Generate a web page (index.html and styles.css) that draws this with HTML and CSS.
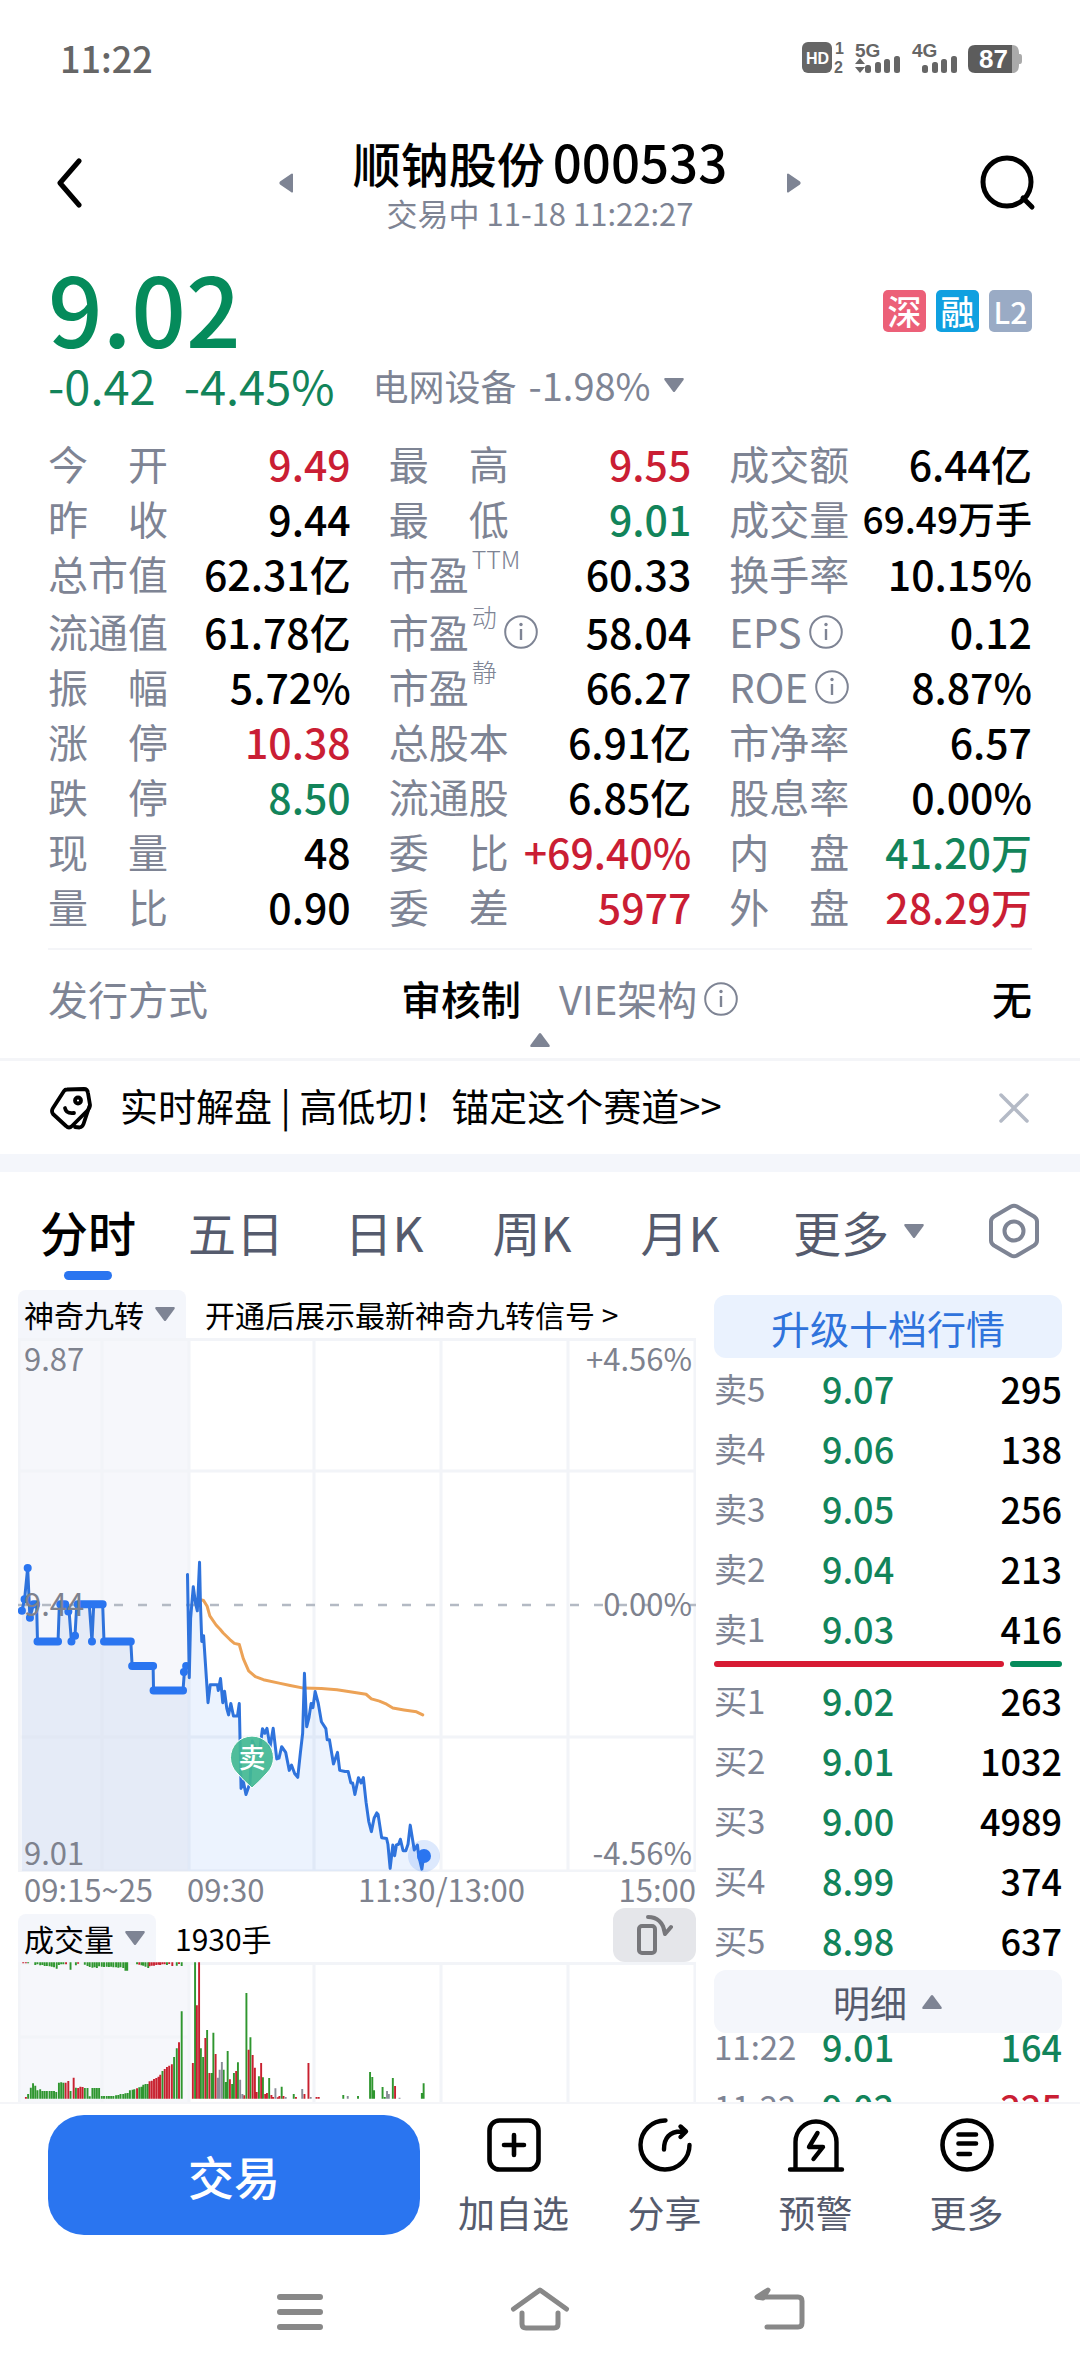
FILE: index.html
```html
<!DOCTYPE html>
<html lang="zh-CN">
<head>
<meta charset="utf-8">
<meta name="viewport" content="width=device-width, initial-scale=1">
<title>顺钠股份 000533</title>
<link rel="stylesheet" href="styles.css">
</head>
<body>
<svg class="defs" aria-hidden="true">
  <symbol id="info" viewBox="0 0 34 34"><circle cx="17" cy="17" r="15.8" fill="none" stroke="currentColor" stroke-width="2"/><path d="M17 14v11" stroke="currentColor" stroke-width="2.4"/><circle cx="17" cy="9.5" r="1.7" fill="currentColor"/></symbol>
  <symbol id="down" viewBox="0 0 22 16"><path d="M2 1h18q1.500 .5 .5 2L12 14.500q-1 1-2 0L1.500 3q-1-1.500 .5-2z" fill="currentColor"/></symbol>
  <symbol id="up" viewBox="0 0 22 16"><path d="M2 15h18q1.500-.5 .5-2L12 1.500q-1-1-2 0L1.500 13q-1 1.500 .5 2z" fill="currentColor"/></symbol>
</svg>

<div class="status">
  <time>11:22</time>
  <svg class="status-icons" width="222" height="34" viewBox="0 0 222 34" role="img" aria-label="信号与电量">
    <g fill="#666">
      <rect x="1" y="2" width="30" height="31" rx="6"/>
      <text x="34" y="14" class="st-num">1</text><text x="33" y="33" class="st-num">2</text>
      <text x="54" y="17" class="st-net">5G</text><text x="111" y="17" class="st-net">4G</text>
      <path d="M59 18l5 6H54zM59 33l5-6H54z"/>
      <rect x="64" y="25" width="6" height="8" rx="2.500"/><rect x="74" y="22" width="6" height="11" rx="2.500"/><rect x="83" y="19" width="6" height="14" rx="2.500"/><rect x="93" y="16" width="6" height="17" rx="2.500"/>
      <rect x="121" y="25" width="6" height="8" rx="2.500"/><rect x="131" y="22" width="6" height="11" rx="2.500"/><rect x="140" y="19" width="6" height="14" rx="2.500"/><rect x="150" y="16" width="6" height="17" rx="2.500"/>
    </g>
    <path d="M200 5h11q7 0 7 8v1h1q2 0 2 3v4q0 3-2 3h-1v1q0 8-7 8h-11z" fill="#aaa"/>
    <path d="M174 5h37v28h-37q-7 0-7-7V12q0-7 7-7z" fill="#5c5c5c"/>
    <text x="5" y="24" class="st-hd">HD</text>
    <text x="178" y="28" class="st-bat">87</text>
  </svg>
</div>

<header class="head">
  <button class="icon-btn" aria-label="返回"><svg width="30" height="50" viewBox="0 0 30 50"><path d="M25 3L6 25l19 22" fill="none" stroke="#000" stroke-width="5" stroke-linecap="round" stroke-linejoin="round"/></svg></button>
  <button class="icon-btn" aria-label="上一只"><svg width="16" height="22" viewBox="0 0 16 22"><path d="M15 2v18q-1 1-2 0L2 12.500q-1.500-1.500 0-3L13 2q1-1 2 0z" fill="#7e8494"/></svg></button>
  <div class="head-title">
    <h1>顺钠股份<span>000533</span></h1>
    <p>交易中 11-18 11:22:27</p>
  </div>
  <button class="icon-btn" aria-label="下一只"><svg width="16" height="22" viewBox="0 0 16 22"><path d="M1 2v18q1 1 2 0l11-7.500q1.500-1.500 0-3L3 2Q2 1 1 2z" fill="#7e8494"/></svg></button>
  <button class="icon-btn" aria-label="搜索"><svg width="56" height="56" viewBox="0 0 56 56"><circle cx="27" cy="27" r="24" fill="none" stroke="#000" stroke-width="5"/><path d="M43 43l9 9" stroke="#000" stroke-width="5" stroke-linecap="round"/></svg></button>
</header>

<main class="content">
  <section class="price">
    <div class="price-top">
      <strong>9.02</strong>
      <div class="badges"><span class="badge sz">深</span><span class="badge rz">融</span><span class="badge l2">L2</span></div>
    </div>
    <div class="price-sub">
      <span class="chg">-0.42</span><span class="chg">-4.45%</span>
      <button class="sector"><span>电网设备</span><span class="sector-num">-1.98%</span><svg width="22" height="16"><use href="#down"/></svg></button>
    </div>
  </section>

  <dl class="quotes">
    <div><dt>今　开</dt><dd class="red">9.49</dd></div>
    <div><dt>最　高</dt><dd class="red">9.55</dd></div>
    <div><dt>成交额</dt><dd>6.44亿</dd></div>
    <div><dt>昨　收</dt><dd>9.44</dd></div>
    <div><dt>最　低</dt><dd class="green">9.01</dd></div>
    <div><dt>成交量</dt><dd class="small">69.49万手</dd></div>
    <div><dt>总市值</dt><dd>62.31亿</dd></div>
    <div><dt>市盈<sup>TTM</sup></dt><dd>60.33</dd></div>
    <div><dt>换手率</dt><dd>10.15%</dd></div>
    <div><dt>流通值</dt><dd>61.78亿</dd></div>
    <div><dt>市盈<sup>动</sup><svg class="info"><use href="#info"/></svg></dt><dd>58.04</dd></div>
    <div><dt>EPS<svg class="info"><use href="#info"/></svg></dt><dd>0.12</dd></div>
    <div><dt>振　幅</dt><dd>5.72%</dd></div>
    <div><dt>市盈<sup>静</sup></dt><dd>66.27</dd></div>
    <div><dt>ROE<svg class="info"><use href="#info"/></svg></dt><dd>8.87%</dd></div>
    <div><dt>涨　停</dt><dd class="red">10.38</dd></div>
    <div><dt>总股本</dt><dd>6.91亿</dd></div>
    <div><dt>市净率</dt><dd>6.57</dd></div>
    <div><dt>跌　停</dt><dd class="green">8.50</dd></div>
    <div><dt>流通股</dt><dd>6.85亿</dd></div>
    <div><dt>股息率</dt><dd>0.00%</dd></div>
    <div><dt>现　量</dt><dd>48</dd></div>
    <div><dt>委　比</dt><dd class="red">+69.40%</dd></div>
    <div><dt>内　盘</dt><dd class="green">41.20万</dd></div>
    <div><dt>量　比</dt><dd>0.90</dd></div>
    <div><dt>委　差</dt><dd class="red">5977</dd></div>
    <div><dt>外　盘</dt><dd class="red">28.29万</dd></div>
  </dl>

  <dl class="issue">
    <div><dt>发行方式</dt><dd>审核制</dd></div>
    <div><dt>VIE架构<svg class="info"><use href="#info"/></svg></dt><dd>无</dd></div>
  </dl>
  <button class="collapse" aria-label="收起"><svg width="22" height="16"><use href="#up"/></svg></button>

  <div class="promo">
    <svg width="42" height="44" viewBox="0 0 42 44" fill="none" stroke="#000" stroke-width="3.800" stroke-linejoin="round" stroke-linecap="round"><path d="M17 3.500L34 3q3.500 0 4 4L40 19q0 3-2 5L22 40q-3 3-6 0L3 28q-2-3 0-6L14 5q1-1.500 3-1.500z"/><path d="M39.500 20l-6 18q-1 3-4 3.500L25 41"/><circle cx="28" cy="14.500" r="3"/><path d="M15 22q1 6 9 5"/></svg>
    <a href="#">实时解盘 | 高低切！锚定这个赛道&gt;&gt;</a>
    <button class="icon-btn" aria-label="关闭"><svg width="32" height="32" viewBox="0 0 32 32"><path d="M3 3l26 26M29 3L3 29" stroke="#b4bac6" stroke-width="3.500" stroke-linecap="round"/></svg></button>
  </div>

  <nav class="tabs">
    <button class="active">分时</button>
    <button>五日</button>
    <button>日K</button>
    <button>周K</button>
    <button>月K</button>
    <button class="more">更多<svg width="22" height="16"><use href="#down"/></svg></button>
    <button aria-label="设置"><svg width="52" height="56" viewBox="0 0 52 56" fill="none" stroke="#7e8494" stroke-width="4"><path d="M23 3.500q3-1.500 6 0l17 10q3 2 3 5v19q0 3-3 5l-17 10q-3 1.500-6 0l-17-10q-3-2-3-5v-19q0-3 3-5z" stroke-linejoin="round"/><circle cx="26" cy="28" r="9.500"/></svg></button>
  </nav>

  <div class="board">
    <section class="charts">
      <div class="chart-head">
        <label class="pick"><select aria-label="主图指标"><option>神奇九转</option></select><svg width="22" height="16"><use href="#down"/></svg></label>
        <a href="#">开通后展示最新神奇九转信号 &gt;</a>
      </div>
      <div class="plot">
        <svg viewBox="0 0 678 534" role="img" aria-label="分时走势">
          <rect width="171" height="534" fill="#f6f7fb"/>
          <path d="M1 1.500H677V533H1zM84 0V534M171 0V534M296 0V534M423 0V534M550 0V534M0 133H678M0 399H678" fill="none" stroke="#f2f4f8" stroke-width="3"/>
          <path d="M0 267H678" stroke="#b4bac4" stroke-width="2.500" stroke-dasharray="9 15"/>
          <g transform="translate(-18 -41) scale(.4464 .3827)" fill="none">
            <path d="M49 820L55 790 62 708 67 838 75 803 82 803 84 900 130 900 133 803 150 803 155 825 160 900 168 885 172 803 200 803 206 900 210 803 230 803 233 900 293 900 296 964 343 964 344 1028 410 1028 413 980 421 964V1500H49z" fill="#2a60d0" fill-opacity=".08"/>
            <path d="M421 725L424 995 427 840 433 757 438 800 442 820 447 693 449 800 452 900 456 885 466 1060 471 1013 487 1013 489 1028 494 997 499 1060 503 1030 508 1075 512 1092 517 1062 523 1095 532 1095 536 1062 540 1284 545 1265 551 1300 560 1270 565 1160 580 1200 588 1128 593 1140 598 1127 605 1175 612 1127 620 1207 625 1205 631 1175 640 1190 648 1237 653 1223 660 1245 667 1255 673 1190 678 1140 682 983 687 1123 692 1100 697 1062 701 1073 706 1031 713 1062 720 1110 730 1128 733 1157 738 1157 747 1220 756 1190 761 1237 773 1240 780 1240 786 1270 790 1270 795 1300 803 1256 809 1270 814 1256 820 1320 826 1370 832 1397 838 1362 844 1348 847 1352 855 1413 866 1415 869 1430 874 1493 880 1432 884 1460 888 1432 893 1430 897 1417 903 1447 909 1447 914 1430 919 1380 928 1445 935 1432 938 1460 945 1495 949 1462V1500H421z" fill="#2a75f0" fill-opacity=".09"/>
            <g stroke-linejoin="round" stroke-linecap="round">
              <path class="ns avg" d="M447 790L456 793 464 808 470 833 484 857 493 868 500 878 515 895 525 905 536 908 545 945 557 977 572 992 590 1000 625 1009 650 1015 680 1022 720 1023 755 1026 820 1038 832 1050 850 1056 866 1064 880 1074 905 1079 933 1084 947 1092"/>
              <path class="ns line" d="M49 820L55 790 62 708 67 838 75 803 82 803 84 900 130 900 133 803 150 803 155 825 160 900 168 885 172 803 200 803 206 900 210 803 230 803 233 900 293 900 296 964 343 964 344 1028 410 1028 413 980 418 964"/>
              <path class="ns dots" d="M49 820h.1M55 790h.1M62 708h.1M67 838h.1M75 803h6M84 900H130M135 803H146M153 822h.1M160 900h.1M168 885h.1M174 803H230M206 900h.1M233 900H293M296 964H343M344 1028H410M412 980h.1M417 964h.1"/>
              <path class="ns line" d="M420 725L424 995 427 840 433 757 438 800 442 820 447 693 449 800 452 900 456 885 466 1060 471 1013 487 1013 489 1028 494 997 499 1060 503 1030 508 1075 512 1092 517 1062 523 1095 532 1095 536 1062 540 1284 545 1265 551 1300 560 1270 565 1160 580 1200 588 1128 593 1140 598 1127 605 1175 612 1127 620 1207 625 1205 631 1175 640 1190 648 1237 653 1223 660 1245 667 1255 673 1190 678 1140 682 983 687 1123 692 1100 697 1062 701 1073 706 1031 713 1062 720 1110 730 1128 733 1157 738 1157 747 1220 756 1190 761 1237 773 1240 780 1240 786 1270 790 1270 795 1300 803 1256 809 1270 814 1256 820 1320 826 1370 832 1397 838 1362 844 1348 847 1352 855 1413 866 1415 869 1430 874 1493 880 1432 884 1460 888 1432 893 1430 897 1417 903 1447 909 1447 914 1430 919 1380 928 1445 935 1432 938 1460 945 1495 949 1462"/>
            </g>
          </g>
          <circle cx="406" cy="518" r="16" fill="#2a75f0" fill-opacity=".16"/>
          <circle cx="406" cy="518" r="7" fill="#2a75f0"/>
          <path d="M234 450Q226 443 219 435A21.500 21.500 0 1 1 249 435Q242 443 234 450z" fill="#42b893" fill-opacity=".92" stroke="#fff" stroke-width="1"/>
          <text x="234" y="430" class="pin">卖</text>
        </svg>
        <span class="tick tl">9.87</span><span class="tick tr">+4.56%</span>
        <span class="tick ml">9.44</span><span class="tick mr">0.00%</span>
        <span class="tick bl">9.01</span><span class="tick br">-4.56%</span>
      </div>
      <div class="axis"><span>09:15~25</span><span>09:30</span><span>11:30/13:00</span><span>15:00</span></div>
      <div class="chart-head vol-head">
        <label class="pick"><select aria-label="副图指标"><option>成交量</option></select><svg width="22" height="16"><use href="#down"/></svg></label>
        <span>1930手</span>
        <button class="rotate" aria-label="横屏"><svg width="36" height="42" viewBox="0 0 36 42" fill="none" stroke="#77777b" stroke-width="4" stroke-linecap="round" stroke-linejoin="round"><rect x="2" y="12" width="16" height="27" rx="3"/><path d="M11 3q14 0 17 16M26 12l2 8 6-7"/></svg></button>
      </div>
      <svg class="vol" viewBox="0 0 678 270" role="img" aria-label="成交量柱图">
        <rect width="171" height="270" fill="#f6f7fb"/>
        <path d="M1 270V1.500H677V270M84 0V270M171 0V270M296 0V270M423 0V270M550 0V270M0 75H171" fill="none" stroke="#f2f4f8" stroke-width="3"/>
        <g transform="translate(-18 -105) scale(.4464 .3333)" fill="none" stroke-width="4.300">
          <path stroke="#2f962f" d="M63 711V725M69 692V725M74 679V725M79 686V725M84 700V725M90 697V725M95 702V725M100 702V725M105 702V725M111 702V725M116 702V725M121 702V725M126 705V725M132 677V725M137 676V725M142 677V725M158 702V725M170 692V725M190 693V725M196 693V725M201 718V725M207 693V725M212 693V725M217 693V725M222 693V725M228 717V725M233 717V725M239 717V725M244 717V725M249 717V725M254 717V725M260 715V725M265 714V725M270 711V725M276 711V725M281 709V725M286 708V725M291 700V725M297 698V725M301 697V725M312 691V725M317 689V725M321 683V725M326 681V725M331 681V725M364 642V725M390 600V725M396 574V725M407 463V725
          M63 316V319M79 316V324M84 316V322M90 316V325M95 316V324M100 316V327M105 316V327M111 316V328M116 316V329M121 316V331M127 316V335M132 316V324M137 316V322M142 316V322M158 316V338M170 316V325M190 316V323M196 316V327M201 316V330M207 316V332M212 316V331M217 316V333M222 316V328M228 316V329M233 316V330M239 316V329M244 316V330M249 316V329M254 316V331M260 316V331M265 316V332M270 316V331M276 316V333M281 316V341M285 316V341M307 316V322M317 316V325M321 316V326M326 316V329M332 316V333M374 316V324M396 316V326M407 316V327
          M437 316V725M450 574V725M455 600V725M464 519V725M474 648V725M478 527V725M501 638V725M506 675V725M510 582V725M520 681V725M524 648V725M533 616V725M552 408V725M561 541V725M580 658V725M589 661V725M603 663V725M631 689V725M658 711V725M769 714V725M802 717V725M829 645V725M834 660V725M838 700V725M857 690V725M862 720V725M880 663V725M945 708V725M949 679V725"/>
          <path stroke="#c8202f" d="M58 720V725M147 677V725M153 672V725M165 662V725M175 693V725M180 689V725M185 690V725M307 694V725M335 673V725M340 671V725M345 666V725M350 663V725M355 659V725M359 653V725M369 636V725M374 630V725M379 626V725M385 622V725M401 556V725
          M52 316V319M58 316V319M148 316V322M175 316V320M312 316V323M335 316V328M340 316V326M345 316V326M350 316V324M355 316V323M359 316V324M364 316V322M369 316V322M379 316V321M386 316V327M401 316V321
          M432 618V725M441 445V725M446 316V725M460 543V725M469 648V725M483 591V725M515 667V725M529 642V725M547 715V725M557 578V725M566 594V725M571 632V725M575 705V725M585 618V725M594 711V725M598 708V725M608 714V725M612 720V725M622 721V725M626 717V725M635 717V725M663 720V725M682 711V725M691 618V725M709 720V725M714 720V725M885 687V725"/>
          <path stroke="#8a8d98" d="M488 662V725M492 638V725M497 615V725M538 668V725M543 711V725M617 694V725M640 720V725M677 696V725M696 720V725M779 717V725M867 702V725M871 711V725M895 722V725"/>
        </g>
      </svg>
    </section>

    <section class="depth">
      <button class="upgrade">升级十档行情</button>
      <table>
        <tbody>
          <tr><th scope="row">卖5</th><td class="green">9.07</td><td>295</td></tr>
          <tr><th scope="row">卖4</th><td class="green">9.06</td><td>138</td></tr>
          <tr><th scope="row">卖3</th><td class="green">9.05</td><td>256</td></tr>
          <tr><th scope="row">卖2</th><td class="green">9.04</td><td>213</td></tr>
          <tr><th scope="row">卖1</th><td class="green">9.03</td><td>416</td></tr>
        </tbody>
      </table>
      <div class="ratio"><span style="flex-grow:84.700"></span><span style="flex-grow:15.300"></span></div>
      <table>
        <tbody>
          <tr><th scope="row">买1</th><td class="green">9.02</td><td>263</td></tr>
          <tr><th scope="row">买2</th><td class="green">9.01</td><td>1032</td></tr>
          <tr><th scope="row">买3</th><td class="green">9.00</td><td>4989</td></tr>
          <tr><th scope="row">买4</th><td class="green">8.99</td><td>374</td></tr>
          <tr><th scope="row">买5</th><td class="green">8.98</td><td>637</td></tr>
        </tbody>
      </table>
      <button class="detail">明细<svg width="22" height="16"><use href="#up"/></svg></button>
      <table class="trades">
        <tbody>
          <tr><th scope="row">11:22</th><td class="green">9.01</td><td class="green">164</td></tr>
          <tr><th scope="row">11:22</th><td class="green">9.02</td><td class="red">225</td></tr>
        </tbody>
      </table>
    </section>
  </div>
</main>

<footer class="actions">
  <button class="trade">交易</button>
  <button class="act"><svg width="56" height="56" viewBox="0 0 56 56" fill="none" stroke="#000" stroke-width="4.600" stroke-linecap="round"><rect x="3.500" y="3.500" width="49" height="49" rx="10"/><path d="M28 18v20M18 28h20"/></svg>加自选</button>
  <button class="act"><svg width="56" height="56" viewBox="0 0 56 56" fill="none" stroke="#000" stroke-width="4.400" stroke-linecap="round" stroke-linejoin="round"><path d="M28.500 3.500A24.500 24.500 0 1 0 52.500 28"/><path d="M27 32.500q0-18 17-18h4.500M43.500 9.500l5.500 5-5.500 5.500"/></svg>分享</button>
  <button class="act"><svg width="58" height="56" viewBox="0 0 58 56" fill="none" stroke="#000" stroke-width="4.400" stroke-linecap="round" stroke-linejoin="round"><path d="M8.500 52V25a20.500 20.500 0 0 1 41 0V52M3 52.500h52"/><path d="M30.500 16L22 30h14L26.500 42"/></svg>预警</button>
  <button class="act"><svg width="56" height="56" viewBox="0 0 56 56" fill="none" stroke="#000" stroke-width="4.600" stroke-linecap="round"><circle cx="28" cy="28" r="24.500"/><path d="M19.500 17.500h17.500M19.500 26.500h17.500M19.500 37h11.500"/></svg>更多</button>
</footer>

<nav class="sysnav">
  <button aria-label="任务"><svg width="60" height="50" viewBox="0 0 60 50" stroke="#888" stroke-width="6" stroke-linecap="round"><path d="M10 11h40M10 26h40M10 41h40"/></svg></button>
  <button aria-label="主页"><svg width="60" height="50" viewBox="0 0 60 50" fill="none" stroke="#888" stroke-width="5" stroke-linecap="round" stroke-linejoin="round"><path d="M3.500 23L30 4l26.500 19M12 27v11q0 4 4 4h28q4 0 4-4V27"/></svg></button>
  <button aria-label="返回"><svg width="60" height="50" viewBox="0 0 60 50" fill="none" stroke="#888" stroke-width="5" stroke-linecap="round" stroke-linejoin="round"><path d="M8 11h40q4 0 4 4v22q0 4-4 4H17"/><path d="M18 4L7 11l6 1z" fill="#888"/></svg></button>
</nav>
</body>
</html>
```

FILE: styles.css
```css
* { box-sizing: border-box; margin: 0; padding: 0; }

body {
  display: flex;
  flex-direction: column;
  height: 100vh;
  background: #fff;
  color: #000;
  font-family: "Noto Sans CJK SC", sans-serif;
  font-size: 36px;
}

button, select {
  font: inherit;
  color: inherit;
  border: 0;
  background: none;
  appearance: none;
}

a { color: inherit; text-decoration: none; }
svg { display: block; flex: none; }
.defs { width: 0; height: 0; position: absolute; }
.red { color: #ca1e34; }
.green { color: #12845a; }
.icon-btn { display: flex; }

/* status bar */
.status {
  display: flex;
  justify-content: space-between;
  align-items: center;
  padding: 28px 57px 0 60px;
  height: 86px;
  color: #666;
  font-size: 36px;
  font-weight: 500;
}
.status-icons { font-family: "Liberation Sans", sans-serif; font-weight: 700; }
.st-num { font-size: 16px; }
.st-net { font-size: 19px; }
.st-hd { font-size: 16px; fill: #fff; }
.st-bat { font-size: 26px; fill: #fff; }

/* title bar */
.head {
  display: grid;
  grid-template-columns: 224px 1fr auto 1fr 234px;
  align-items: center;
  padding: 46px 44px 0 54px;
}
.head-title { text-align: center; }
.head .icon-btn { margin-bottom: 2px; }
.head .icon-btn:nth-child(2) { justify-self: start; }
.head .icon-btn:nth-child(4), .head .icon-btn:last-child { justify-self: end; }
h1 {
  display: flex;
  align-items: baseline;
  justify-content: center;
  gap: 8px;
  font-size: 48px;
  line-height: 58px;
  font-weight: 500;
}
h1 span { font-size: 51px; }
.head p { color: #7e8494; font-size: 31px; line-height: 44px; }

.content { flex: 1; min-height: 0; overflow: hidden; }

/* last price */
.price { padding: 22px 48px 0; }
.price-top { display: flex; justify-content: space-between; align-items: center; }
.price-top strong { color: #058b5b; font-size: 96px; line-height: 100px; font-weight: 500; }
.badges { display: flex; gap: 10px; padding-top: 8px; }
.badge {
  width: 43px;
  border-radius: 5px;
  color: #fff;
  font-size: 34px;
  font-weight: 500;
  line-height: 42px;
  text-align: center;
}
.sz { background: #ec6078; }
.rz { background: #10a0e0; }
.l2 { background: #9aabc5; font-size: 30px; }
.price-sub { display: flex; align-items: center; gap: 28px; height: 56px; }
.chg { color: #12845a; font-size: 47px; line-height: 56px; }
.sector { display: flex; align-items: center; gap: 12px; margin-left: 10px; color: #7e8494; line-height: 56px; }
.sector-num { font-size: 38px; }

/* quote grid */
.quotes {
  display: grid;
  grid-template-columns: repeat(3, 1fr);
  grid-template-rows: repeat(3, 55px) 58px;
  grid-auto-rows: 55px;
  column-gap: 38px;
  align-items: end;
  margin: 0 48px;
  padding: 23px 0 14px;
  border-bottom: 2px solid #f4f5f8;
}
.quotes div, .issue div { display: flex; justify-content: space-between; }
dt {
  display: flex;
  align-items: center;
  color: #7e8494;
  font-size: 40px;
  font-weight: 400;
  line-height: 55px;
  white-space: nowrap;
}
dd { font-size: 41px; line-height: 55px; font-weight: 500; white-space: nowrap; }
dd.small { font-size: 37px; }
sup { align-self: flex-start; margin-left: 3px; font-size: 25px; line-height: 24px; font-weight: 300; }
.info { width: 34px; height: 34px; margin-left: 7px; }

.issue {
  display: grid;
  grid-template-columns: 473fr 473fr;
  column-gap: 38px;
  padding: 21px 48px 0;
}
.issue dd { font-size: 40px; }
.collapse { display: flex; justify-content: center; width: 100%; padding: 6px 0 10px; color: #7e8494; }

/* promo strip */
.promo {
  display: flex;
  align-items: center;
  height: 96px;
  padding: 0 50px;
  border-top: 3px solid #f4f5f8;
}
.promo a { flex: 1; margin-left: 28px; font-size: 38px; line-height: 56px; padding-bottom: 6px; }

/* period tabs */
.tabs {
  display: grid;
  grid-template-columns: repeat(5, 148fr) 210fr 100fr;
  padding: 22px 16px 10px 14px;
  border-top: 18px solid #f4f6fb;
  color: #555b6d;
  font-size: 48px;
}
.tabs button {
  display: flex;
  position: relative;
  justify-content: center;
  align-items: center;
  height: 86px;
  padding-bottom: 12px;
}
.tabs .active { color: #000; font-weight: 500; }
.tabs .active::after {
  content: "";
  position: absolute;
  bottom: 0;
  width: 48px;
  height: 9px;
  border-radius: 5px;
  background: #2a75f0;
}
.more { gap: 14px; }
.more svg { color: #7e8494; }

/* chart and depth */
.board { display: flex; gap: 18px; padding: 0 18px; }
.charts { flex: 678; min-width: 0; font-size: 30px; }
.depth { flex: 348; min-width: 0; padding-top: 5px; }
.chart-head { display: flex; align-items: center; height: 48px; gap: 19px; }
.chart-head a { line-height: 48px; }
.pick { display: grid; align-items: center; align-self: stretch; border-radius: 8px 8px 0 0; background: #f4f6fb; }
.pick select { grid-area: 1 / 1; height: 100%; padding: 0 42px 0 6px; }
.pick svg { grid-area: 1 / 1; justify-self: end; margin-right: 10px; color: #7e8494; pointer-events: none; }
.plot { position: relative; }
.plot > svg, .vol { width: 100%; height: auto; }
.ns { vector-effect: non-scaling-stroke; }
.avg { stroke: #eca256; stroke-width: 3px; }
.line { stroke: #2f73dc; stroke-width: 3px; }
.dots { stroke: #2a75f0; stroke-width: 8px; }
.pin { fill: #fff; font-size: 27px; font-weight: 500; text-anchor: middle; }
.tick { position: absolute; color: #7e828e; font-size: 31px; line-height: 40px; }
.tl { left: 6px; top: 0; }
.tr { right: 4px; top: 0; }
.ml { left: 6px; top: calc(50% - 22px); }
.mr { right: 4px; top: calc(50% - 22px); }
.bl { left: 6px; bottom: 0; }
.br { right: 4px; bottom: 0; }
.axis { display: grid; grid-template-columns: 163fr 171fr 244fr 94fr; height: 36px; padding-left: 6px; color: #7e828e; font-size: 31px; line-height: 34px; }
.axis span:last-child { text-align: right; }
.vol-head { height: 54px; }
.vol-head .pick { align-self: end; height: 48px; }
.vol-head span { line-height: 54px; padding-top: 6px; }
.rotate { display: flex; justify-content: center; align-items: center; width: 83px; height: 54px; margin-left: auto; border-radius: 12px; background: #e5e6ea; }

.upgrade, .detail {
  display: flex;
  justify-content: center;
  align-items: center;
  gap: 14px;
  width: 100%;
  height: 63px;
  border-radius: 12px;
}
.upgrade { background: #eaf2fe; color: #2f73dc; font-size: 39px; }
.detail { background: #f4f6fb; color: #555b6d; font-size: 37px; }
.detail svg { color: #7e8494; }
table { width: 100%; border-collapse: collapse; table-layout: fixed; }
tr { height: 60px; }
th { width: 31%; text-align: left; font-size: 33px; font-weight: 400; color: #7e8494; line-height: 60px; }
td { font-size: 36px; font-weight: 500; line-height: 60px; }
td:last-child { text-align: right; }
.ratio { display: flex; gap: 6px; height: 6px; margin: 3px 0; }
.ratio span { flex-basis: 0; border-radius: 3px; background: #d71a33; }
.ratio span + span { background: #058b5b; }
.trades { margin-top: -17px; }

/* bottom actions */
.actions {
  display: flex;
  padding: 11px 38px 0 48px;
  height: 134px;
  border-top: 2px solid #f4f5f8;
}
.trade { width: 372px; height: 120px; margin-right: 18px; border-radius: 36px; background: #2a75f0; color: #fff; font-size: 46px; font-weight: 500; }
.act { flex: 1; display: flex; flex-direction: column; align-items: center; gap: 12px; padding-top: 2px; color: #555b6d; font-size: 37px; line-height: 54px; }

.sysnav { display: flex; justify-content: center; gap: 180px; padding: 50px 0 40px; }
```
